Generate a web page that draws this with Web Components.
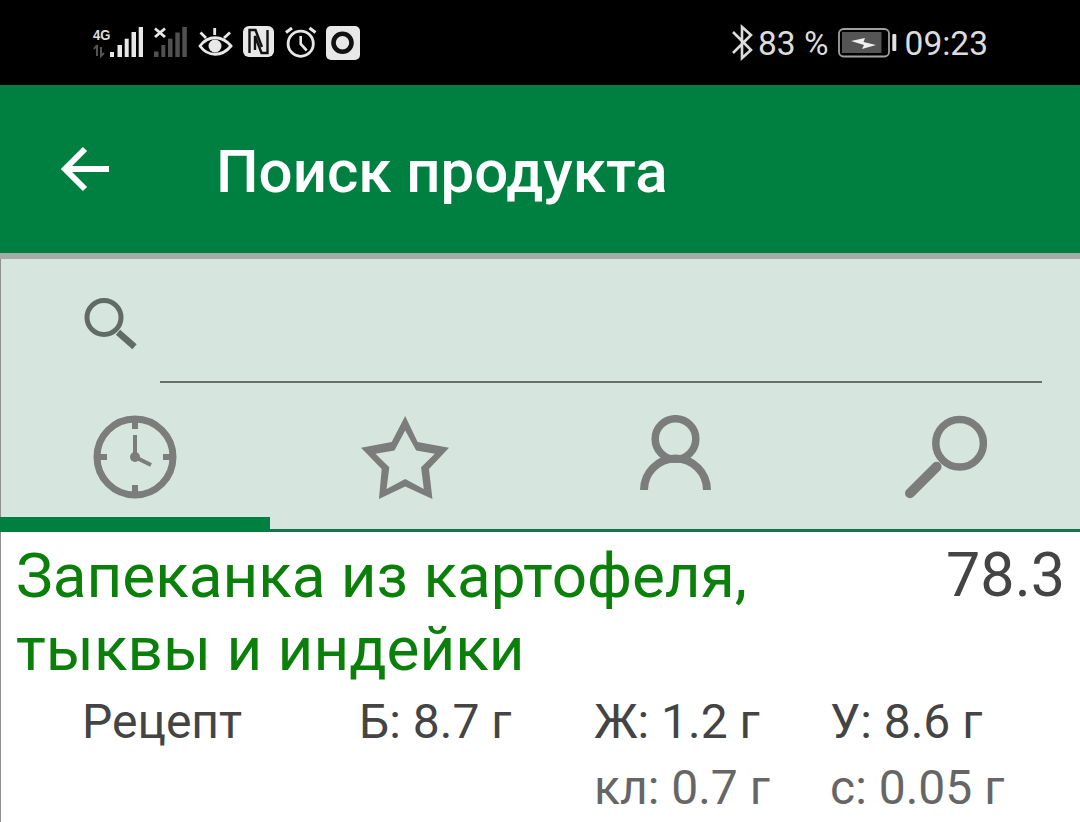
<!DOCTYPE html>
<html lang="ru">
<head>
<meta charset="utf-8">
<title>Поиск продукта</title>
<style>
  html, body { margin: 0; padding: 0; background: #fff; }
  body { width: 1080px; height: 822px; overflow: hidden; font-family: Roboto, "Liberation Sans", sans-serif; }
</style>
</head>
<body>
<status-bar></status-bar>
<app-bar>Поиск продукта</app-bar>
<search-panel></search-panel>
<product-row name="Запеканка из картофеля, тыквы и индейки" kcal="78.3" kind="Рецепт"
  b="Б: 8.7 г" j="Ж: 1.2 г" u="У: 8.6 г" kl="кл: 0.7 г" s="с: 0.05 г"></product-row>

<script>
// Статус-бар: координаты иконок в viewBox совпадают с координатами экрана
class StatusBar extends HTMLElement {
  constructor() {
    super();
    this.attachShadow({ mode: 'open' });
    this.shadowRoot.innerHTML = `
      <style>
        :host { display: flex; align-items: center; justify-content: space-between; height: 85px; background: #000; color: #dcdcdc; padding: 0 92px; box-sizing: border-box; font: 400 33.5px Roboto, sans-serif; }
        .side { display: flex; align-items: center; }
        svg { display: block; }
        span { position: relative; top: 1px; }
        text { font: 700 15px "Liberation Sans", sans-serif; fill: #dcdcdc; }
      </style>
      <div class="side">
        <svg width="268" height="37" viewBox="92 24 268 37" fill="none">
          <text x="93" y="39.500" textLength="17.500" lengthAdjust="spacingAndGlyphs">4G</text>
          <path d="M97 45v11M94 49l3-4M101 47v9l3-3" stroke="#555" stroke-width="2"/>
          <g fill="#e8e8e8">
            <rect x="110" y="52" width="4" height="5"/><rect x="117.500" y="45" width="4.500" height="12"/><rect x="124.700" y="38.700" width="4" height="18.300"/><rect x="131.500" y="32" width="4.500" height="25"/><rect x="138.700" y="27" width="4.300" height="30"/>
          </g>
          <g fill="#505050">
            <rect x="154" y="51.500" width="4.500" height="5.500"/><rect x="161.300" y="45" width="4" height="12"/><rect x="168" y="38.700" width="4.500" height="18.300"/><rect x="175.300" y="32.500" width="4.500" height="24.500"/><rect x="182.300" y="27" width="4.500" height="30"/>
          </g>
          <path d="M155 28.500 165 37M165 28.500 155 37" stroke="#e8e8e8" stroke-width="2.800"/>
          <!-- глаз -->
          <g stroke="#e8e8e8" stroke-width="2.800">
            <path d="M200 46c8-11 22-11 31 0c-9 11-23 11-31 0z"/>
            <path d="M200.500 32.500 206 38M214.700 28v7M230 32.500 224 38"/>
          </g>
          <circle cx="215" cy="46" r="6.500" fill="#e8e8e8"/>
          <!-- NFC -->
          <rect x="243" y="26" width="31" height="31" rx="6" fill="#e8e8e8"/>
          <path d="M249.500 53V30H255.500L262 47M267.500 30V53H261.500L255 36V50" stroke="#111" stroke-width="2.400"/>
          <!-- будильник -->
          <circle cx="300.700" cy="43.700" r="12.600" stroke="#e8e8e8" stroke-width="2.800"/>
          <path d="M300.700 36v8l6 6.500" stroke="#e8e8e8" stroke-width="2.600"/>
          <path d="M286 32.500 292 28M315.500 32.500 309.500 28" stroke="#e8e8e8" stroke-width="3"/>
          <!-- квадрат с кольцом -->
          <rect x="326" y="26" width="34" height="34" rx="5" fill="#e8e8e8"/>
          <circle cx="342.500" cy="42.700" r="9" stroke="#111" stroke-width="4.600"/>
        </svg>
      </div>
      <div class="side">
        <svg width="22" height="37" viewBox="731 24 22 37" fill="none" stroke="#dcdcdc" stroke-width="2.600"><path d="M733 32 751 50 742 58V27L751 35 733 53"/></svg>
        <span style="margin-left:5px">83 %</span>
        <svg width="60" height="34" viewBox="836 26 60 34" style="margin-left:8px">
          <rect x="838" y="29" width="50" height="27.500" rx="4.500" fill="none" stroke="#a0a0a0" stroke-width="1.800"/>
          <rect x="841" y="32" width="39.500" height="21" fill="#555"/>
          <path d="M850 41 864 38 862.500 42 875 45 861 49 863 45Z" fill="#f0f0f0"/>
          <rect x="891.300" y="34" width="4" height="17" rx="1" fill="#e0e0e0"/>
        </svg>
        <span style="margin-left:8px">09:23</span>
      </div>`;
  }
}

// Верхняя панель
class AppBar extends HTMLElement {
  constructor() {
    super();
    this.attachShadow({ mode: 'open' });
    this.shadowRoot.innerHTML = `
      <style>
        :host { display: flex; align-items: center; height: 168px; background: #008040; color: #fff; box-sizing: border-box; padding-left: 60px; }
        svg { display: block; flex: none; }
        .title { margin: 4px 0 0 106px; font: 500 60px Roboto, sans-serif; white-space: nowrap; }
      </style>
      <svg width="50" height="46" viewBox="0 0 50 46" fill="none" stroke="#fff" stroke-width="6"><path d="M49 23H5M25 3 5 23l20 20"/></svg>
      <div class="title"><slot></slot></div>`;
  }
}

// Поле поиска и вкладки
class SearchPanel extends HTMLElement {
  constructor() {
    super();
    this.attachShadow({ mode: 'open' });
    const gray = '#7b7d7c';
    this.shadowRoot.innerHTML = `
      <style>
        :host { display: block; background: #d7e5df; border-top: 6px solid #a6aba8; border-bottom: 3px solid #14744c; box-sizing: border-box; height: 279px; position: relative; box-shadow: inset 1px 0 0 #8f8f8f; }
        .search { display: flex; height: 124px; padding-left: 84px; padding-right: 38px; }
        .field { flex: 1; margin-left: 22px; border-bottom: 2px solid #66706c; height: 122px; }
        .ico { margin-top: 39px; flex: none; display: block; }
        .tabs { display: grid; grid-template-columns: repeat(4, 270px); }
        .tab { display: flex; justify-content: center; padding-top: 32px; }
        .tab svg { display: block; }
        .ind { position: absolute; left: 0; bottom: -3px; width: 270px; height: 15px; background: #008040; }
      </style>
      <div class="search">
        <svg class="ico" width="54" height="54" viewBox="0 0 54 54" fill="none" stroke="#606b66"><circle cx="20" cy="19.500" r="17" stroke-width="5"/><path d="M34 34.300 50.500 48.700" stroke-width="6.500"/></svg>
        <div class="field"></div>
      </div>
      <div class="tabs">
        <div class="tab"><svg width="84" height="84" viewBox="0 0 84 84" fill="none" stroke="${gray}">
          <circle cx="42" cy="42" r="38" stroke-width="7"/>
          <path d="M42 7v7M42 70v7M7 42h7M70 42h7" stroke-width="6"/>
          <path d="M42 20v22l16 8" stroke-width="4"/><circle cx="42" cy="42" r="5" fill="${gray}" stroke="none"/>
        </svg></div>
        <div class="tab"><svg width="88" height="84" viewBox="1048 524 255 251" preserveAspectRatio="none" fill="${gray}" fill-rule="evenodd">
          <path d="M1176 527 1212 605 1303 622 1245 685 1255 775 1176 738 1100 775 1108 685 1048 622 1137 605ZM1176 570 1145 630 1090 640 1130 680 1122 745 1176 715 1230 745 1222 680 1262 640 1208 630Z"/>
        </svg></div>
        <div class="tab"><svg width="72" height="76" viewBox="0 0 72 76" fill="none" stroke="${gray}">
          <circle cx="36.500" cy="24" r="20.300" stroke-width="7.500"/><path d="M5 75A31.500 31.500 0 0 1 68 75" stroke-width="8"/>
        </svg></div>
        <div class="tab"><svg width="84" height="84" viewBox="0 0 84 84" fill="none" stroke="${gray}">
          <circle cx="56.600" cy="28.200" r="23.800" stroke-width="7.500"/><path d="M33.600 51.700 7 78.300" stroke-width="10" stroke-linecap="round"/>
        </svg></div>
      </div>
      <div class="ind"></div>`;
  }
}

// Строка продукта
class ProductRow extends HTMLElement {
  constructor() {
    super();
    this.attachShadow({ mode: 'open' });
    const a = n => this.getAttribute(n) || '';
    this.shadowRoot.innerHTML = `
      <style>
        :host { display: block; background: #fff; box-sizing: border-box; height: 290px; padding: 7px 15px 0 16px; font-family: Roboto, sans-serif; box-shadow: inset 1px 0 0 #8f8f8f; }
        .top { display: flex; justify-content: space-between; align-items: flex-start; }
        .name { width: 800px; font-size: 62px; line-height: 73px; color: #0a800a; }
        .kcal { font-size: 61px; line-height: 73px; color: #444; }
        .macros { display: grid; grid-template-columns: 277px 235px 236px auto; margin-top: 4px; padding-left: 66px; font-size: 48px; line-height: 66px; color: #444; }
        .dim { color: #666; }
      </style>
      <div class="top"><div class="name">${a('name')}</div><div class="kcal">${a('kcal')}</div></div>
      <div class="macros">
        <span>${a('kind')}</span><span>${a('b')}</span><span>${a('j')}</span><span>${a('u')}</span>
        <span></span><span></span><span class="dim">${a('kl')}</span><span class="dim">${a('s')}</span>
      </div>`;
  }
}

customElements.define('status-bar', StatusBar);
customElements.define('app-bar', AppBar);
customElements.define('search-panel', SearchPanel);
customElements.define('product-row', ProductRow);
</script>
</body>
</html>
